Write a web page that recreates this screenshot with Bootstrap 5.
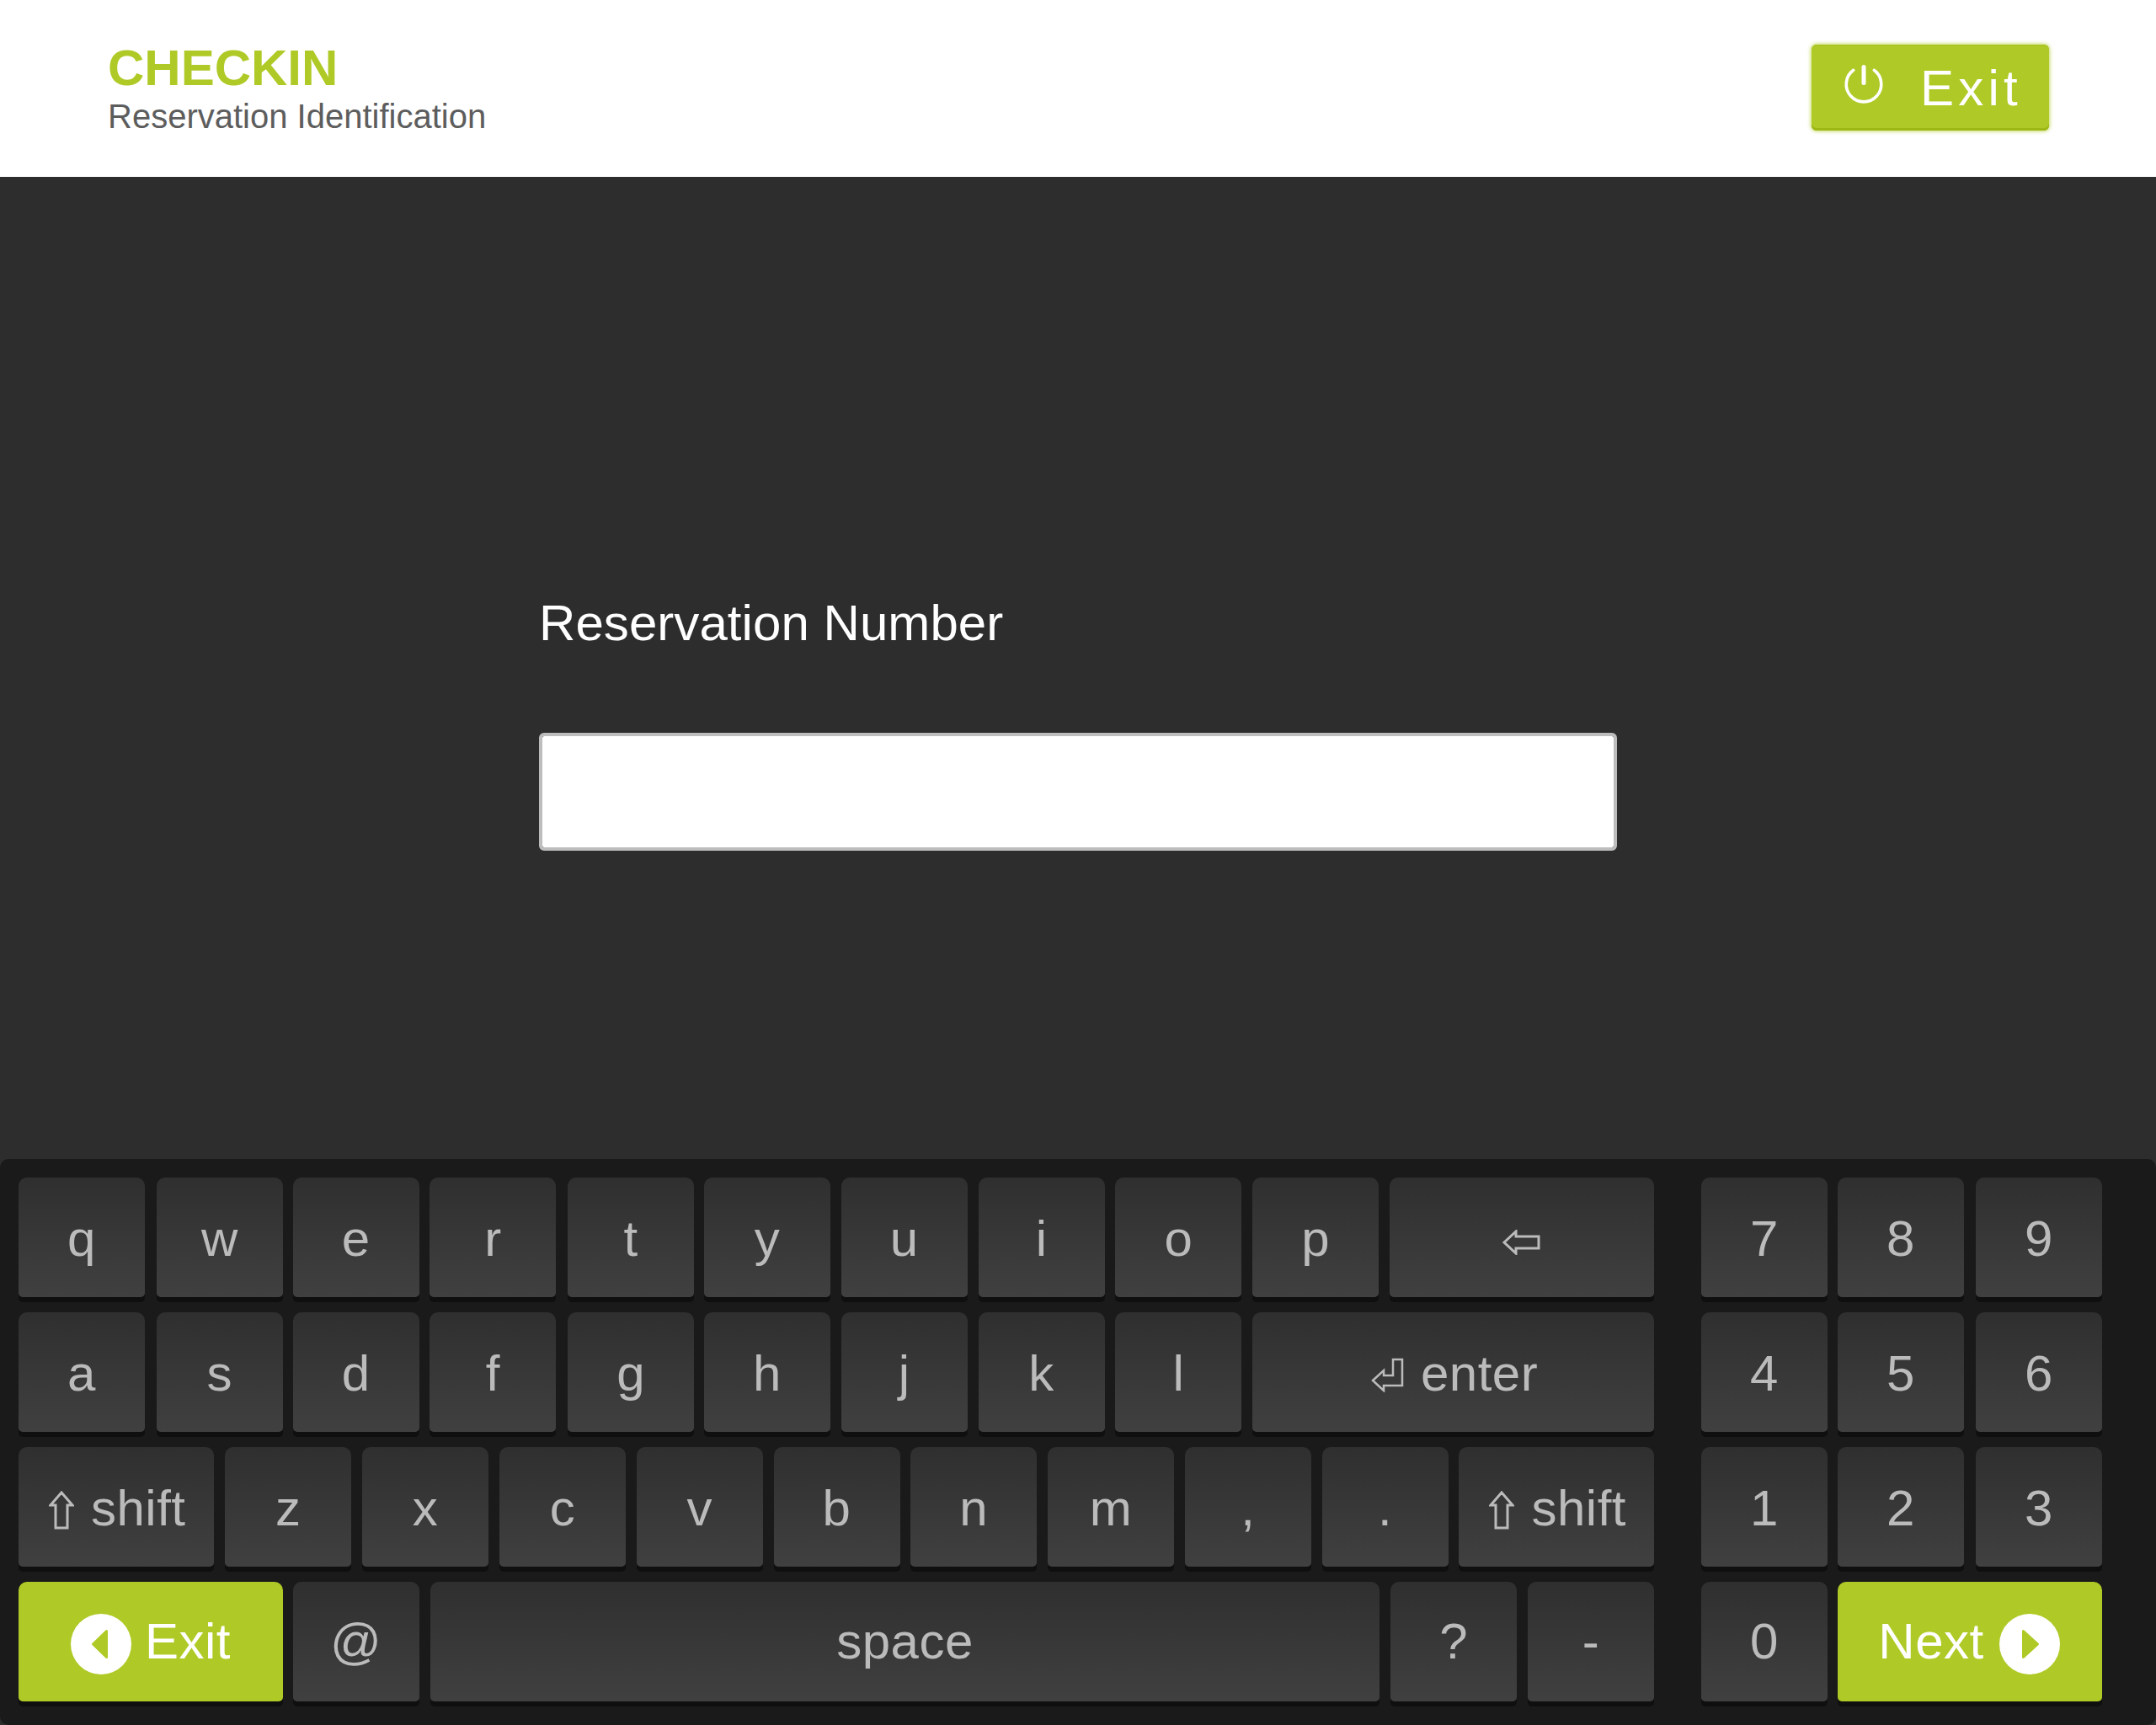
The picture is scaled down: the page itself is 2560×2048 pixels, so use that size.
<!DOCTYPE html>
<html lang="en">
<head>
    <meta charset="UTF-8">
    <meta name="viewport" content="width=device-width, initial-scale=1.0">
    <title>Checkin</title>
    <link rel="stylesheet" href="https://cdn.jsdelivr.net/npm/bootstrap@5.3.3/dist/css/bootstrap.min.css">
    <style>
        body {
            font-family: "Liberation Sans", Arial, sans-serif;
            background: #2d2d2d;
            height: 2048px;
        }
        .top-bar {
            height: 210px;
            padding: 0 127px 0 128px;
        }
        .title-block { padding-top: 51px; }
        .title-main {
            font-size: 60px;
            line-height: 60px;
            font-weight: 700;
            color: #afca26;
        }
        .title-sub {
            font-size: 40px;
            line-height: 48px;
            margin-top: 3px;
            color: #5d5d5d;
        }
        .btn.exit-top {
            width: 282px;
            height: 102px;
            margin-top: 53px;
            padding: 0 0 0 38px;
            gap: 43px;
            font-size: 60px;
            line-height: 1;
            letter-spacing: 5.2px;
            color: #fff;
            background: #afca26;
            border: 0;
            border-radius: 6px;
            box-shadow: 0 0 4px 1px rgba(175, 202, 38, .7), inset 0 -3px 0 #9db714, inset 0 1px 0 #a5c01c;
        }
        .power-icon { margin-bottom: 8px; }
        .exit-label { padding-top: 2px; }
        .main-area { padding-top: 494px; }
        .field-label {
            font-size: 60px;
            line-height: 72px;
            margin-bottom: 94px;
            letter-spacing: .06px;
            color: #fff;
        }
        .form-control.field-input {
            height: 140px;
            font-size: 60px;
            border: 4px solid #bdbdbd;
            border-radius: 6px;
        }
        .keyboard {
            background: #1a1a1a;
            height: 672px;
            padding: 22px 64px 0 22px;
            border-radius: 10px;
        }
        .key-col { gap: 18px; }
        .key-col-main { width: 1942px; }
        .key-col-num { width: 476px; }
        .key-row { gap: 12.8px; }
        .key-col-num .key-row { gap: 12px; }
        .btn.kb-key {
            flex: 0 0 150px;
            height: 142px;
            padding: 3px 0 0;
            font-size: 60px;
            line-height: 1;
            letter-spacing: .5px;
            color: #bbb;
            background: linear-gradient(#2f2f2f, #404040);
            border: 0;
            border-radius: 10px 10px 5px 5px;
            box-shadow: 0 6px 0 #0f0f0f;
        }
        .btn.kb-key.kb-nudge { margin-left: 1px; margin-right: -1px; }
        .btn.kb-key.kb-last-num { margin-left: 2px; }
        .btn.kb-key.kb-grow { flex: 1 1 0; }
        .btn.kb-key.kb-shift-left { margin-right: 1px; }
        .btn.kb-key.kb-double { flex: 0 0 314px; margin-right: -1px; }
        .btn.kb-key.kb-icon-gap { gap: 20px; padding-left: 3px; }
        .key-row-last .btn.kb-key { padding-top: 0; }
        .btn.kb-key.kb-green {
            color: #fff;
            background: #afca26;
            gap: 16px;
        }
        .key-row-last .btn.kb-key.kb-next { gap: 18px; padding-right: 2px; }
        .disc-icon { margin-top: 6px; }
    </style>
</head>
<body class="d-flex flex-column">

    <header class="top-bar bg-white d-flex justify-content-between align-items-start flex-shrink-0">
        <div class="title-block">
            <div class="title-main">CHECKIN</div>
            <div class="title-sub">Reservation Identification</div>
        </div>
        <button type="button" class="btn exit-top d-flex align-items-center">
            <svg class="power-icon" width="48" height="48" viewBox="0 0 48 48" fill="none" stroke="#fff" stroke-linecap="round">
                <path d="M11.7 7.3A20.8 20.8 0 1 0 36.3 7.3" stroke-width="3.6"/>
                <path d="M24 3.5V22.5" stroke-width="5"/>
            </svg>
            <span class="exit-label">Exit</span>
        </button>
    </header>

    <main class="main-area flex-grow-1">
        <form class="w-50 mx-auto">
            <label class="field-label d-block" for="resNumber">Reservation Number</label>
            <input type="text" class="form-control field-input" id="resNumber">
        </form>
    </main>

    <section class="keyboard d-flex justify-content-between flex-shrink-0">
        <div class="key-col key-col-main d-flex flex-column">
            <div class="key-row d-flex">
                <button class="btn kb-key">q</button>
                <button class="btn kb-key kb-nudge">w</button>
                <button class="btn kb-key">e</button>
                <button class="btn kb-key">r</button>
                <button class="btn kb-key kb-nudge">t</button>
                <button class="btn kb-key">y</button>
                <button class="btn kb-key">u</button>
                <button class="btn kb-key">i</button>
                <button class="btn kb-key">o</button>
                <button class="btn kb-key">p</button>
                <button class="btn kb-key kb-grow d-flex align-items-center justify-content-center" aria-label="backspace">
                    <svg width="45" height="30" viewBox="0 0 45 30" fill="none" stroke="#bbb" stroke-width="3" class="mt-2">
                        <path d="M2 15 16 2V8H43V22H16V28Z"/>
                    </svg>
                </button>
            </div>
            <div class="key-row d-flex">
                <button class="btn kb-key">a</button>
                <button class="btn kb-key kb-nudge">s</button>
                <button class="btn kb-key">d</button>
                <button class="btn kb-key">f</button>
                <button class="btn kb-key kb-nudge">g</button>
                <button class="btn kb-key">h</button>
                <button class="btn kb-key">j</button>
                <button class="btn kb-key">k</button>
                <button class="btn kb-key">l</button>
                <button class="btn kb-key kb-grow kb-icon-gap d-flex align-items-center justify-content-center">
                    <svg width="39" height="41" viewBox="0 0 39 41" fill="none" stroke="#bbb" stroke-width="2.5" class="mt-1">
                        <path d="M2 27 15 15V21H26V2H37V33H15V39Z"/>
                    </svg>
                    <span>enter</span>
                </button>
            </div>
            <div class="key-row d-flex">
                <button class="btn kb-key kb-grow kb-shift-left kb-icon-gap d-flex align-items-center justify-content-center">
                    <svg width="30" height="46" viewBox="0 0 30 46" fill="none" stroke="#bbb" stroke-width="3" class="mt-1">
                        <path d="M15 2 28 17H22V44H8V17H2Z"/>
                    </svg>
                    <span>shift</span>
                </button>
                <button class="btn kb-key">z</button>
                <button class="btn kb-key">x</button>
                <button class="btn kb-key">c</button>
                <button class="btn kb-key">v</button>
                <button class="btn kb-key">b</button>
                <button class="btn kb-key">n</button>
                <button class="btn kb-key">m</button>
                <button class="btn kb-key">,</button>
                <button class="btn kb-key">.</button>
                <button class="btn kb-key kb-grow kb-icon-gap d-flex align-items-center justify-content-center">
                    <svg width="30" height="46" viewBox="0 0 30 46" fill="none" stroke="#bbb" stroke-width="3" class="mt-1">
                        <path d="M15 2 28 17H22V44H8V17H2Z"/>
                    </svg>
                    <span>shift</span>
                </button>
            </div>
            <div class="key-row key-row-last d-flex">
                <button class="btn kb-key kb-double kb-green d-flex align-items-center justify-content-center">
                    <svg class="disc-icon" width="72" height="72" viewBox="0 0 72 72">
                        <circle cx="36" cy="36" r="36" fill="#fff"/>
                        <path d="M26.5 36 42.5 20.5V51.5Z" fill="#afca26" stroke="#afca26" stroke-width="3" stroke-linejoin="round"/>
                    </svg>
                    <span>Exit</span>
                </button>
                <button class="btn kb-key">@</button>
                <button class="btn kb-key kb-grow">space</button>
                <button class="btn kb-key">?</button>
                <button class="btn kb-key">-</button>
            </div>
        </div>

        <div class="key-col key-col-num d-flex flex-column">
            <div class="key-row d-flex">
                <button class="btn kb-key">7</button>
                <button class="btn kb-key">8</button>
                <button class="btn kb-key kb-last-num">9</button>
            </div>
            <div class="key-row d-flex">
                <button class="btn kb-key">4</button>
                <button class="btn kb-key">5</button>
                <button class="btn kb-key kb-last-num">6</button>
            </div>
            <div class="key-row d-flex">
                <button class="btn kb-key">1</button>
                <button class="btn kb-key">2</button>
                <button class="btn kb-key kb-last-num">3</button>
            </div>
            <div class="key-row key-row-last d-flex">
                <button class="btn kb-key">0</button>
                <button class="btn kb-key kb-grow kb-green kb-next d-flex align-items-center justify-content-center">
                    <span>Next</span>
                    <svg class="disc-icon" width="72" height="72" viewBox="0 0 72 72">
                        <circle cx="36" cy="36" r="36" fill="#fff"/>
                        <path d="M45.5 36 28.5 20.5V51.5Z" fill="#afca26" stroke="#afca26" stroke-width="3" stroke-linejoin="round"/>
                    </svg>
                </button>
            </div>
        </div>
    </section>

    <script src="https://cdn.jsdelivr.net/npm/bootstrap@5.3.3/dist/js/bootstrap.bundle.min.js"></script>
</body>
</html>
